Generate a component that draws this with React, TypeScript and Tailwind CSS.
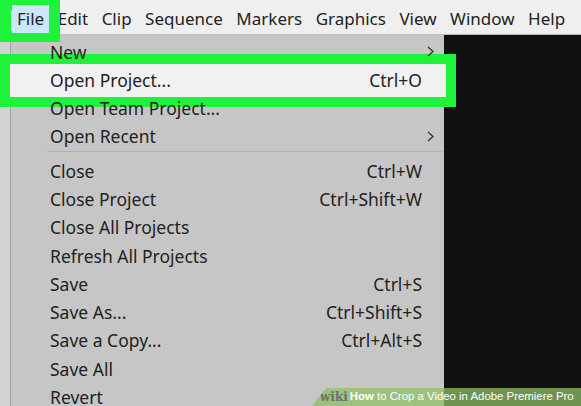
import React from 'react';

const FONT = { fontFamily: '"Noto Sans", "Open Sans", sans-serif' };

const menus = ['File', 'Edit', 'Clip', 'Sequence', 'Markers', 'Graphics', 'View', 'Window', 'Help'];

type Item = { label: string; shortcut?: string; sub?: boolean; active?: boolean } | 'sep';

const items: Item[] = [
  { label: 'New', sub: true },
  { label: 'Open Project...', shortcut: 'Ctrl+O', active: true },
  { label: 'Open Team Project...' },
  { label: 'Open Recent', sub: true },
  'sep',
  { label: 'Close', shortcut: 'Ctrl+W' },
  { label: 'Close Project', shortcut: 'Ctrl+Shift+W' },
  { label: 'Close All Projects' },
  { label: 'Refresh All Projects' },
  { label: 'Save', shortcut: 'Ctrl+S' },
  { label: 'Save As...', shortcut: 'Ctrl+Shift+S' },
  { label: 'Save a Copy...', shortcut: 'Ctrl+Alt+S' },
  { label: 'Save All' },
  { label: 'Revert' },
];

const Chevron = () => (
  <svg width="7" height="11" viewBox="0 0 7 11" fill="none" stroke="#333" strokeWidth="1.3">
    <polyline points="1,1 6,5.5 1,10" />
  </svg>
);

export default function App() {
  return (
    <div className="relative w-[581px] h-[406px] overflow-hidden bg-[#111111] text-[#222]" style={FONT}>
      {/* menu bar */}
      <div className="relative z-20 h-[35px] bg-[#efefef] border-b border-[#bcbcbc] flex items-start pt-[5px] pl-[12px] gap-[3.5px] text-[17px]">
        {menus.map((m, i) => (
          <div key={m} className={`h-[28px] flex items-center px-[5px] ${i === 0 ? 'relative z-40' : ''}`}>
            {i === 0 && (
              <div className="absolute left-[-12px] top-[-5px] w-[60px] h-[42px] border-[11px] border-[#1ff23a]" />
            )}
            <span className={i === 0 ? 'relative bg-[#cce6fb] h-[28px] px-[5px] -mx-[5px] flex items-center' : ''}>{m}</span>
          </div>
        ))}
      </div>

      <div className="flex h-[371px]">
        <div className="w-[10px] bg-[#d2d2d2]" />
        <div className="w-[1px] bg-[#a4a4a4]" />
        <div className="w-[433px] bg-[#c6c6c6] pt-[2.5px] text-[17.5px]">
          {items.map((it, idx) =>
            it === 'sep' ? (
              <div key={idx} className="pb-[5px] pl-[36px]">
                <div className="h-[1px] bg-[#b2b2b2]" />
              </div>
            ) : (
              <div key={idx} className="relative h-[28.3px] flex items-center pl-[39px]">
                {it.active && (
                  <div className="absolute left-[-11px] right-[-12px] top-[-12px] bottom-[-13px] border-[10px] border-[#1ff23a] bg-[#f1f1f1] z-10" />
                )}
                <span className="relative z-20 flex-1">{it.label}</span>
                <span className="relative z-20">{it.shortcut}</span>
                <span className="relative z-20 w-[22px] flex justify-end pr-[10px]">{it.sub && <Chevron />}</span>
              </div>
            )
          )}
        </div>
        <div className="flex-1 bg-[#111111]" />
      </div>

      {/* watermark */}
      <div className="absolute left-[312px] top-[388px] w-[269px] h-[18px] bg-[#8fc068]/75 [clip-path:polygon(14px_0,100%_0,100%_100%,0_100%)] flex items-center pl-[8px] whitespace-nowrap z-30">
        <span className="text-[12px] font-bold text-[#6e6e6e] mr-[2px]" style={{ fontFamily: '"DejaVu Serif", serif' }}>wiki</span>
        <span className="text-[11.4px] text-white" style={{ fontFamily: '"Liberation Sans", sans-serif' }}>
          <b>How</b> to Crop a Video in Adobe Premiere Pro
        </span>
      </div>
    </div>
  );
}
